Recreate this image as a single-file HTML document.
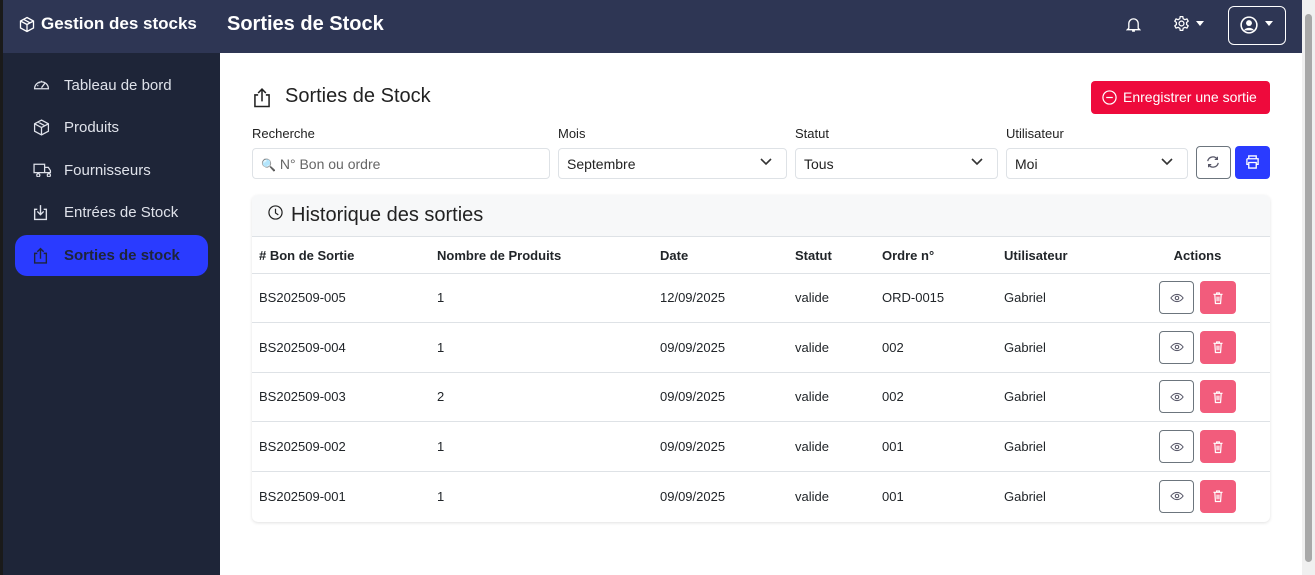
<!DOCTYPE html>
<html><head><meta charset="utf-8"><style>
*{box-sizing:border-box;margin:0;padding:0}
body{width:1315px;height:575px;overflow:hidden;font-family:"Liberation Sans",sans-serif;background:#fff;position:relative;font-size:14px;color:#212529}
.hdr{position:absolute;left:0;top:0;width:1302px;height:53px;background:#2e3654;color:#fff}
.side{position:absolute;left:0;top:53px;width:220px;height:522px;background:#1e2538}
.lb{position:absolute;left:0;top:0;width:3px;height:575px;background:#1a1a1a}
.sb{position:absolute;right:0;top:0;width:13px;height:575px;background:#f0f0f0}
.sb div{position:absolute;left:3px;top:14px;width:7px;height:548px;background:#a8a8a8;border-radius:4px}
.nav{position:absolute;left:15px;width:193px;height:41px;border-radius:12px;color:#dfe2ea;font-size:15px;display:flex;align-items:center;padding-left:49px}
.nav svg{position:absolute;left:18px;top:12px}
.nav.a{background:#2a3bff;color:#1e2538;font-weight:bold}
.lbl{position:absolute;font-size:13px;color:#222;top:126px}
.inp{position:absolute;top:148px;height:31px;border:1px solid #dee2e6;border-radius:4px;font-size:14px;padding:7px 8px;color:#222}
.inp .ch{position:absolute;right:14px;top:9px}
table{position:absolute;left:252px;top:236px;width:1018px;border-collapse:collapse;font-size:13px}
th{text-align:left;height:37px;font-weight:bold;padding-left:7px;border-top:1px solid #dee2e6;border-bottom:1px solid #dee2e6}
td{height:49.6px;padding-left:7px;border-bottom:1px solid #dee2e6}
td.ac{text-align:center;padding:0 10px 0 0}
.eye{display:inline-block;width:35px;height:33px;border:1px solid #6c757d;border-radius:4px;vertical-align:middle;position:relative}
.del{display:inline-block;width:36px;height:33px;background:#f25c7c;border-radius:4px;vertical-align:middle;margin-left:6px;position:relative}
.eye svg,.del svg{position:absolute;left:50%;top:50%;transform:translate(-50%,-50%)}
</style></head><body>
<div class="hdr">
 <svg style="position:absolute;left:19px;top:16px" width="16" height="17" viewBox="0 0 16 16" fill="none" stroke="#fff" stroke-width="1.3"><path d="M8 1L14.5 4.5V11.5L8 15L1.5 11.5V4.5Z M1.5 4.5L8 8L14.5 4.5 M8 8V15 M4.5 2.8L11 6.3"/></svg>
 <div style="position:absolute;left:41px;top:14px;font-size:17px;font-weight:bold">Gestion des stocks</div>
 <div style="position:absolute;left:227px;top:13px;font-size:20px;font-weight:bold">Sorties de Stock</div>
 <svg style="position:absolute;left:1126px;top:16px" width="15" height="17" viewBox="0 0 16 18" fill="none" stroke="#fff" stroke-width="1.4"><path d="M3 13V8a5 5 0 0110 0v5l1.5 1.5h-13z M6.5 16h3"/></svg>
 <svg style="position:absolute;left:1173px;top:15px" width="17" height="17" viewBox="0 0 16 16" fill="none" stroke="#fff" stroke-width="1.2"><circle cx="8" cy="8" r="2.3"/><path d="M6.8 1.5h2.4l.4 2 1.6.9 1.9-.7 1.2 2.1-1.5 1.3v1.8l1.5 1.3-1.2 2.1-1.9-.7-1.6.9-.4 2H6.8l-.4-2-1.6-.9-1.9.7-1.2-2.1 1.5-1.3V7.1L1.7 5.8l1.2-2.1 1.9.7 1.6-.9z"/></svg>
 <div style="position:absolute;left:1196px;top:21px;border:4px solid transparent;border-top:5px solid #fff"></div>
 <div style="position:absolute;left:1228px;top:6px;width:58px;height:39px;border:1px solid #fff;border-radius:6px"></div>
 <svg style="position:absolute;left:1240px;top:16px" width="18" height="18" viewBox="0 0 16 16"><circle cx="8" cy="8" r="7" fill="none" stroke="#fff" stroke-width="1.4"/><circle cx="8" cy="6.3" r="2.6" fill="#fff"/><path d="M3.5 12.8c1.5-3 7.5-3 9 0" fill="#fff"/></svg>
 <div style="position:absolute;left:1265px;top:21px;border:4px solid transparent;border-top:5px solid #fff"></div>
</div>
<div class="side">
 <div class="nav" style="top:12px"><svg width="17" height="15" viewBox="0 0 16 14" fill="none" stroke="#dfe2ea" stroke-width="1.2"><path d="M1.5 11a6.5 6.5 0 1113 0z M8 10l3-4 M4 8h1 M5.5 5l.7.7 M8 3.5v1"/></svg>Tableau de bord</div>
 <div class="nav" style="top:54px"><svg width="17" height="17" viewBox="0 0 16 16" fill="none" stroke="#dfe2ea" stroke-width="1.2"><path d="M8 1L14.5 4.5V11.5L8 15L1.5 11.5V4.5Z M1.5 4.5L8 8L14.5 4.5 M8 8V15 M4.5 2.8L11 6.3"/></svg>Produits</div>
 <div class="nav" style="top:97px"><svg width="19" height="15" viewBox="0 0 18 14" fill="none" stroke="#dfe2ea" stroke-width="1.2"><path d="M1 2h10v8H1z M11 5h3.5l2 3v2H11 M3.5 12.5a1.5 1.5 0 100-.1 M13.5 12.5a1.5 1.5 0 100-.1"/></svg>Fournisseurs</div>
 <div class="nav" style="top:139px"><svg width="15" height="17" viewBox="0 0 14 16" fill="none" stroke="#dfe2ea" stroke-width="1.3"><path d="M4 5H1.5v9.5h11V5H10 M7 1v9 M4 7l3 3 3-3"/></svg>Entrées de Stock</div>
 <div class="nav a" style="top:182px"><svg width="15" height="17" viewBox="0 0 14 16" fill="none" stroke="#1e2538" stroke-width="1.3"><path d="M4 6H1.5v9h11V6H10 M7 11V1.5 M4 4.5l3-3 3 3"/></svg>Sorties de stock</div>
</div>
<div class="lb"></div>
<div class="sb"><div></div></div>

<svg style="position:absolute;left:253px;top:87px" width="18" height="21" viewBox="0 0 14 16" fill="none" stroke="#222" stroke-width="1.2"><path d="M4 6H1.5v9h11V6H10 M7 11V1.5 M4 4.5l3-3 3 3"/></svg>
<div style="position:absolute;left:285px;top:85px;font-size:20px;color:#222">Sorties de Stock</div>
<div style="position:absolute;left:1091px;top:81px;width:179px;height:33px;background:#ee0a3c;border-radius:4px;color:#fff;font-size:14px;padding:8px 0 0 32px">Enregistrer une sortie</div>
<svg style="position:absolute;left:1102px;top:90px" width="15" height="15" viewBox="0 0 16 16" fill="none" stroke="#fff" stroke-width="1.3"><circle cx="8" cy="8" r="7"/><path d="M4.5 8h7"/></svg>

<div class="lbl" style="left:252px">Recherche</div>
<div class="lbl" style="left:558px">Mois</div>
<div class="lbl" style="left:795px">Statut</div>
<div class="lbl" style="left:1006px">Utilisateur</div>
<div class="inp" style="left:252px;width:298px;color:#666"><span style="font-size:12px">🔍</span> N° Bon ou ordre</div>
<div class="inp" style="left:558px;width:229px">Septembre<svg class="ch" width="12" height="8" viewBox="0 0 12 8" fill="none" stroke="#333" stroke-width="1.6"><path d="M1 1l5 5 5-5"/></svg></div>
<div class="inp" style="left:795px;width:203px">Tous<svg class="ch" width="12" height="8" viewBox="0 0 12 8" fill="none" stroke="#333" stroke-width="1.6"><path d="M1 1l5 5 5-5"/></svg></div>
<div class="inp" style="left:1006px;width:182px">Moi<svg class="ch" width="12" height="8" viewBox="0 0 12 8" fill="none" stroke="#333" stroke-width="1.6"><path d="M1 1l5 5 5-5"/></svg></div>
<div style="position:absolute;left:1196px;top:146px;width:35px;height:33px;border:1px solid #6c757d;border-radius:4px"></div>
<svg style="position:absolute;left:1206px;top:155px" width="14" height="14" viewBox="0 0 16 16" fill="none" stroke="#556" stroke-width="1.4"><path d="M2 7a6 6 0 0111-2 M14 9a6 6 0 01-11 2 M13 2v3h-3 M3 14v-3h3"/></svg>
<div style="position:absolute;left:1235px;top:146px;width:35px;height:33px;background:#2a3bff;border-radius:4px"></div>
<svg style="position:absolute;left:1245px;top:155px" width="15" height="14" viewBox="0 0 16 15" fill="none" stroke="#fff" stroke-width="1.4"><path d="M4 4V1h8v3 M2 4h12v6h-2 M4 10H2V4 M4 8h8v6H4z"/></svg>

<div style="position:absolute;left:252px;top:195px;width:1018px;height:327px;border-radius:6px;box-shadow:0 1px 3px rgba(0,0,0,.12)"></div>
<div style="position:absolute;left:252px;top:195px;width:1018px;height:41px;background:#f7f8f9;border-radius:6px 6px 0 0"></div>
<svg style="position:absolute;left:268px;top:205px" width="15" height="15" viewBox="0 0 16 16" fill="none" stroke="#222" stroke-width="1.3"><circle cx="8" cy="8" r="7"/><path d="M8 4v4.5l3 2"/></svg>
<div style="position:absolute;left:291px;top:204px;font-size:20px;color:#222">Historique des sorties</div>
<table>
<tr><th style="width:178px"># Bon de Sortie</th><th style="width:223px">Nombre de Produits</th><th style="width:135px">Date</th><th style="width:87px">Statut</th><th style="width:122px">Ordre n°</th><th style="width:138px">Utilisateur</th><th style="text-align:center;padding:0 10px 0 0">Actions</th></tr>
</table>
<table style="top:273px">
<tr><td style="width:178px">BS202509-005</td><td style="width:223px">1</td><td style="width:135px">12/09/2025</td><td style="width:87px">valide</td><td style="width:122px">ORD-0015</td><td style="width:138px">Gabriel</td><td class="ac"><span class="eye"><svg width="14" height="10" viewBox="0 0 16 10" fill="none" stroke="#556" stroke-width="1.2"><path d="M1 5c4-5.5 10-5.5 14 0-4 5.5-10 5.5-14 0z"/><circle cx="8" cy="5" r="2"/></svg></span><span class="del"><svg width="11" height="13" viewBox="0 0 12 14" fill="none" stroke="#fff" stroke-width="1.3"><path d="M1 3h10 M4.5 3V1.5h3V3 M2.5 3l.7 10h5.6l.7-10 M5 5.5v5 M7 5.5v5"/></svg></span></td></tr>
<tr><td>BS202509-004</td><td>1</td><td>09/09/2025</td><td>valide</td><td>002</td><td>Gabriel</td><td class="ac"><span class="eye"><svg width="14" height="10" viewBox="0 0 16 10" fill="none" stroke="#556" stroke-width="1.2"><path d="M1 5c4-5.5 10-5.5 14 0-4 5.5-10 5.5-14 0z"/><circle cx="8" cy="5" r="2"/></svg></span><span class="del"><svg width="11" height="13" viewBox="0 0 12 14" fill="none" stroke="#fff" stroke-width="1.3"><path d="M1 3h10 M4.5 3V1.5h3V3 M2.5 3l.7 10h5.6l.7-10 M5 5.5v5 M7 5.5v5"/></svg></span></td></tr>
<tr><td>BS202509-003</td><td>2</td><td>09/09/2025</td><td>valide</td><td>002</td><td>Gabriel</td><td class="ac"><span class="eye"><svg width="14" height="10" viewBox="0 0 16 10" fill="none" stroke="#556" stroke-width="1.2"><path d="M1 5c4-5.5 10-5.5 14 0-4 5.5-10 5.5-14 0z"/><circle cx="8" cy="5" r="2"/></svg></span><span class="del"><svg width="11" height="13" viewBox="0 0 12 14" fill="none" stroke="#fff" stroke-width="1.3"><path d="M1 3h10 M4.5 3V1.5h3V3 M2.5 3l.7 10h5.6l.7-10 M5 5.5v5 M7 5.5v5"/></svg></span></td></tr>
<tr><td>BS202509-002</td><td>1</td><td>09/09/2025</td><td>valide</td><td>001</td><td>Gabriel</td><td class="ac"><span class="eye"><svg width="14" height="10" viewBox="0 0 16 10" fill="none" stroke="#556" stroke-width="1.2"><path d="M1 5c4-5.5 10-5.5 14 0-4 5.5-10 5.5-14 0z"/><circle cx="8" cy="5" r="2"/></svg></span><span class="del"><svg width="11" height="13" viewBox="0 0 12 14" fill="none" stroke="#fff" stroke-width="1.3"><path d="M1 3h10 M4.5 3V1.5h3V3 M2.5 3l.7 10h5.6l.7-10 M5 5.5v5 M7 5.5v5"/></svg></span></td></tr>
<tr><td style="border:0">BS202509-001</td><td style="border:0">1</td><td style="border:0">09/09/2025</td><td style="border:0">valide</td><td style="border:0">001</td><td style="border:0">Gabriel</td><td class="ac" style="border:0"><span class="eye"><svg width="14" height="10" viewBox="0 0 16 10" fill="none" stroke="#556" stroke-width="1.2"><path d="M1 5c4-5.5 10-5.5 14 0-4 5.5-10 5.5-14 0z"/><circle cx="8" cy="5" r="2"/></svg></span><span class="del"><svg width="11" height="13" viewBox="0 0 12 14" fill="none" stroke="#fff" stroke-width="1.3"><path d="M1 3h10 M4.5 3V1.5h3V3 M2.5 3l.7 10h5.6l.7-10 M5 5.5v5 M7 5.5v5"/></svg></span></td></tr>
</table>
</body></html>
